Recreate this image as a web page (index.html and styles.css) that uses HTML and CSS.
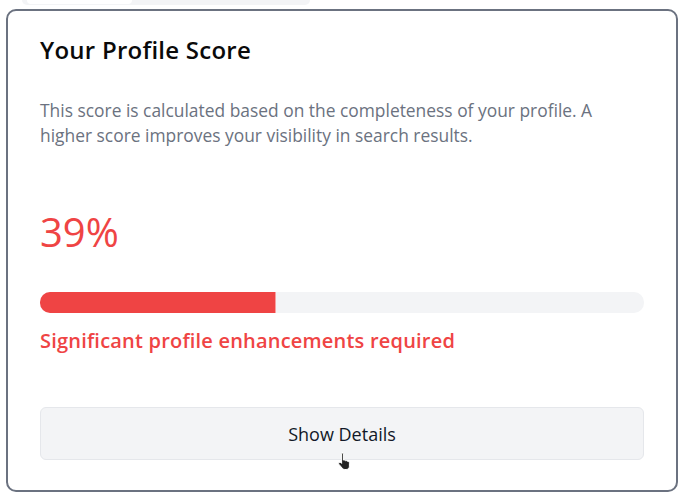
FILE: index.html
```html
<!DOCTYPE html>
<html lang="en">
<head>
<meta charset="utf-8">
<title>Your Profile Score</title>
<link rel="stylesheet" href="styles.css">
</head>
<body>
<div class="tabs-strip"><div class="tab"></div></div>
<section class="card">
  <h2 class="title">Your Profile Score</h2>
  <p class="desc">This score is calculated based on the completeness of your profile. A higher score improves your visibility in search results.</p>
  <div class="score">39%</div>
  <div class="bar"><div class="fill" style="width:39%"></div></div>
  <p class="status">Significant profile enhancements required</p>
  <div class="btn-wrap">
    <button class="btn">Show Details</button>
    <svg class="cursor" width="16" height="20" viewBox="0 0 16 20" aria-hidden="true">
      <path d="M5 1.5c.8 0 1.4.6 1.4 1.4v6.2l.4-.1c.7-.2 1.4.1 1.7.7.6-.3 1.4-.1 1.8.5.6-.2 1.3 0 1.7.6.3.4.4.9.4 1.4v3c0 1.9-1.4 3.3-3.3 3.3H7.8c-1 0-1.9-.5-2.5-1.2L2 13.4c-.5-.6-.4-1.4.2-1.8.5-.4 1.2-.4 1.7.1l.7.7V2.9c0-.8.6-1.4 1.4-1.4z" fill="#222" stroke="#fff" stroke-width="1"/>
    </svg>
  </div>
</section>
</body>
</html>
```
FILE: styles.css
```css
* { box-sizing: border-box; }
html, body { margin: 0; padding: 0; background: #ffffff; }
body {
  font-family: "Open Sans", "Noto Sans", sans-serif;
  color: #111827;
  width: 683px;
  height: 497px;
  overflow: hidden;
}
.tabs-strip {
  margin-left: 22px;
  width: 288px;
  height: 5px;
  background: #f3f4f6;
  border-radius: 0 0 6px 6px;
  padding: 0 5px 1px;
}
.tab {
  width: 105px;
  height: 4px;
  background: #ffffff;
  border-radius: 0 0 4px 4px;
}
.card {
  margin: 4px 5px 0 6px;
  height: 483px;
  border: 2px solid #6b7280;
  border-radius: 10px;
  padding: 24px 32px 0 32px;
  background: #fff;
}
.title {
  margin: 0;
  font-size: 24px;
  line-height: 30px;
  font-weight: 600;
  letter-spacing: 0.25px;
  color: #0a0a0a;
}
.desc {
  margin: 33px 0 0;
  font-size: 17.4px;
  line-height: 25px;
  color: #6b7280;
}
.score {
  margin-top: 62px;
  font-size: 40px;
  line-height: 44px;
  font-weight: 500;
  color: #ef4444;
}
.bar {
  margin-top: 38px;
  height: 21px;
  background: #f3f4f6;
  border-radius: 10px;
  overflow: hidden;
}
.fill {
  height: 100%;
  background: #ef4444;
  border-right: 1px solid #f8a0a0;
}
.status {
  margin: 14px 0 0;
  font-size: 20px;
  line-height: 28px;
  font-weight: 600;
  letter-spacing: 0.2px;
  color: #ef4444;
}
.btn-wrap {
  position: relative;
  margin-top: 52px;
}
.btn {
  display: block;
  width: 100%;
  height: 53px;
  background: #f3f4f6;
  border: 1px solid #e5e7eb;
  border-radius: 6px;
  font-family: inherit;
  font-size: 18px;
  color: #111827;
}
.cursor {
  position: absolute;
  left: 297px;
  top: 44px;
}
```
